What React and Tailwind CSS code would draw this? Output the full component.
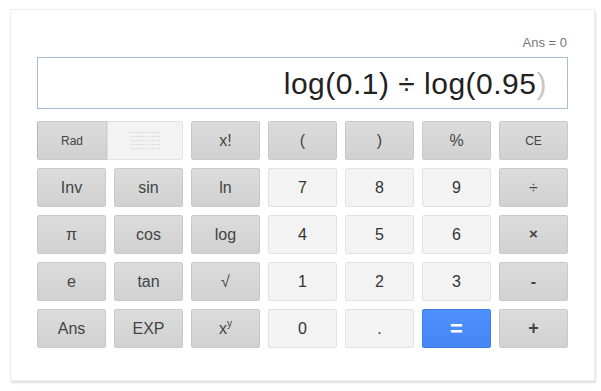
import React from "react";

const dark =
  "flex items-center justify-center rounded-[2px] border border-[#c9c9c9] bg-gradient-to-b from-[#dcdcdc] to-[#d1d1d1] text-[#444]";
const light =
  "flex items-center justify-center rounded-[2px] border border-[#e2e2e2] bg-[#f3f3f3] text-[#333]";

function B({ kind = "dark", children, size = "text-[16px]", cls = "" }) {
  const base = kind === "dark" ? dark : light;
  return <div className={`${base} ${size} ${cls}`}>{children}</div>;
}

function DotGrid() {
  const dots = [];
  for (let r = 0; r < 5; r++) {
    for (let c = 0; c < 14; c++) {
      dots.push(<rect key={`${r}-${c}`} x={c * 2.2} y={r * 4} width="1.2" height="1.2" fill="#d8d8d8" />);
    }
  }
  return (
    <svg width="31" height="18" viewBox="0 0 31 18">
      {dots}
    </svg>
  );
}

export default function App() {
  return (
    <div className="w-[601px] h-[391px] bg-white pl-[10px] pt-[9px] font-['Liberation_Sans',Arial,sans-serif]">
      <div className="w-[585px] h-[372px] bg-white border border-[#efefef] shadow-[1px_2px_2px_rgba(0,0,0,0.13)] px-[26px] pt-[25px]">
        <div className="h-[16px] flex justify-end items-center pr-[1px] text-[13px] text-[#777]">Ans = 0</div>
        <div className="mt-[6px] h-[52px] border border-[#a9bdd6] flex items-center justify-end pr-[20px] pt-[1px] text-[30px] text-[#222] tracking-[0.5px]">
          <span>log(0.1) ÷ log(0.95</span>
          <span className="text-[#c8c8c8]">)</span>
        </div>
        <div className="mt-[12px] grid grid-cols-7 gap-x-[8px] gap-y-[8px] auto-rows-[39px]">
          <div className="col-span-2 flex">
            <div className={`${dark} w-[70px] text-[12px] border-l-[#b5b5b5] rounded-r-none`}>Rad</div>
            <div className={`${light} flex-1 rounded-l-none border-[#dcdcdc]`}>
              <DotGrid />
            </div>
          </div>
          <B>x!</B>
          <B>(</B>
          <B>)</B>
          <B>%</B>
          <B size="text-[12px]">CE</B>

          <B>Inv</B>
          <B>sin</B>
          <B>ln</B>
          <B kind="light">7</B>
          <B kind="light">8</B>
          <B kind="light">9</B>
          <B>÷</B>

          <B>π</B>
          <B>cos</B>
          <B>log</B>
          <B kind="light">4</B>
          <B kind="light" cls="border-[#c4c4c4]">5</B>
          <B kind="light">6</B>
          <B size="text-[15px]" cls="font-bold">×</B>

          <B>e</B>
          <B>tan</B>
          <B>√</B>
          <B kind="light">1</B>
          <B kind="light">2</B>
          <B kind="light">3</B>
          <B cls="font-bold">-</B>

          <B>Ans</B>
          <B>EXP</B>
          <B>
            x<sup className="text-[10px]">y</sup>
          </B>
          <B kind="light">0</B>
          <B kind="light">.</B>
          <div className="flex items-center justify-center rounded-[2px] border border-[#3b7de9] bg-gradient-to-b from-[#4d90fe] to-[#4487f4] text-white text-[22px] font-bold">
            =
          </div>
          <B size="text-[18px]" cls="font-bold">+</B>
        </div>
      </div>
    </div>
  );
}
